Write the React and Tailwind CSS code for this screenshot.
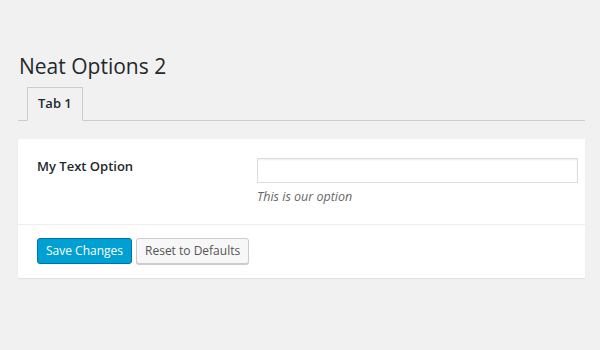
export default function App() {
  return (
    <div
      className="min-h-[350px] w-[600px] bg-[#f1f1f1] pl-[18px] pr-[15px] text-[#444]"
      style={{ fontFamily: '"Open Sans", "Liberation Sans", sans-serif' }}
    >
      <h1 className="pt-[52px] pl-px text-[21px] leading-[29px] font-normal text-[#23282d]">
        Neat Options 2
      </h1>
      <div className="mt-[6px] flex border-b border-[#ccc] pl-[9px]">
        <div className="-mb-px flex h-[34px] items-center border border-[#ccc] border-b-[#f1f1f1] bg-[#f1f1f1] px-[10px] text-[13px] font-semibold text-[#23282d]">
          Tab 1
        </div>
      </div>
      <div className="mt-[18px] bg-white shadow-[0_1px_1px_rgba(0,0,0,0.06)]">
        <div className="flex border-b border-[#eee] pt-[19px] pb-[17px] pl-[19px]">
          <div className="w-[220px] text-[13px] leading-[16px] font-semibold text-[#23282d]">
            My Text Option
          </div>
          <div className="flex flex-col">
            <input
              type="text"
              className="h-[25px] w-[321px] border border-[#ddd] bg-white px-2 text-[13px] shadow-[inset_0_1px_2px_rgba(0,0,0,0.07)] outline-none"
            />
            <p className="mt-[4px] text-[12.5px] leading-[20px] italic text-[#666]">
              This is our option
            </p>
          </div>
        </div>
        <div className="flex gap-[4px] pt-[13px] pb-[14px] pl-[19px]">
          <button className="h-[26px] rounded-[3px] border border-[#0073aa] bg-[#00a0d2] px-[8px] text-[12px] leading-[24px] text-white">
            Save Changes
          </button>
          <button className="h-[26px] rounded-[3px] border border-[#ccc] bg-[#f7f7f7] px-[8px] text-[12px] leading-[24px] text-[#555] shadow-[0_1px_0_#ccc]">
            Reset to Defaults
          </button>
        </div>
      </div>
    </div>
  );
}
